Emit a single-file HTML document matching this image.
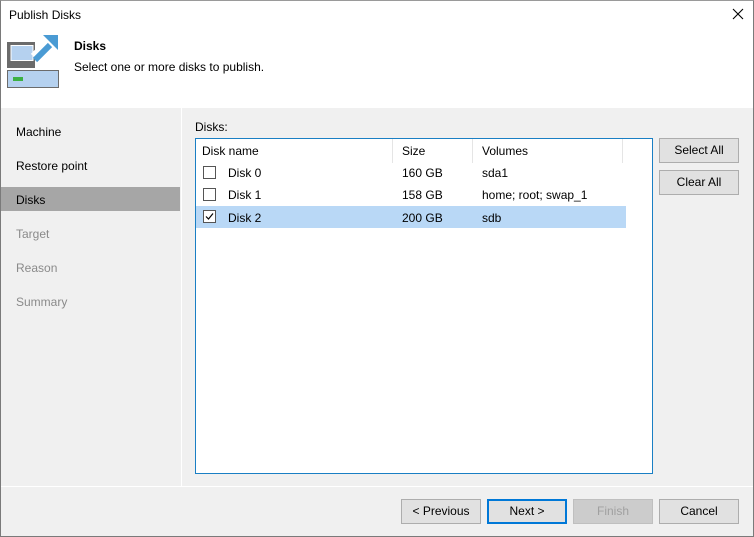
<!DOCTYPE html>
<html><head><style>
*{margin:0;padding:0;box-sizing:border-box}
body{width:754px;height:537px;overflow:hidden;font-family:"Liberation Sans",sans-serif;font-size:12px;color:#000;background:#f0f0f0;position:relative}
.win{position:absolute;left:0;top:0;width:754px;height:537px;border:1px solid #7a7a7a;border-top-color:#9a9a9a}
.abs{position:absolute}
.hdr{left:1px;top:1px;width:752px;height:107px;background:#fff}
.btn{position:absolute;height:25px;background:#e1e1e1;border:1px solid #adadad;text-align:center;line-height:23px;font-size:12px}
.cb{position:absolute;width:13px;height:13px;border:1px solid #555;background:#fff}
</style></head><body>
<div class="win"></div>
<div class="abs hdr"></div>
<div class="abs" style="left:9px;top:8px;font-size:12px">Publish Disks</div>
<svg class="abs" style="left:732px;top:8px" width="12" height="12"><path d="M1 1L11 11M11 1L1 11" stroke="#000" stroke-width="1.1"/></svg>
<svg class="abs" style="left:0;top:0" width="70" height="100">
<rect x="7" y="42" width="28" height="26" fill="#6b6b6b"/>
<rect x="11" y="45.5" width="22" height="15" fill="#b5d1ef" stroke="#fff" stroke-width="1"/>
<path d="M34 57 L48 43" stroke="#fff" stroke-width="9"/>
<path d="M35 60 L50 45" stroke="#4a9bd4" stroke-width="6"/>
<path d="M43 35 L58 35 L58 50 Z" fill="#4a9bd4"/>
<rect x="7.5" y="70.5" width="51" height="17" fill="#b5d1ef" stroke="#6b6b6b"/>
<rect x="13" y="77" width="10" height="4" fill="#3cb043"/>
</svg>
<div class="abs" style="left:74px;top:39px;font-weight:bold;font-size:12px">Disks</div>
<div class="abs" style="left:74px;top:60px">Select one or more disks to publish.</div>
<div class="abs" style="left:181px;top:108px;width:1px;height:378px;background:#fff"></div>
<div class="abs" style="left:16px;top:125px">Machine</div>
<div class="abs" style="left:16px;top:159px">Restore point</div>
<div class="abs" style="left:1px;top:187px;width:179px;height:24px;background:#a6a6a6"></div>
<div class="abs" style="left:16px;top:193px">Disks</div>
<div class="abs" style="left:16px;top:227px;color:#8a8a8a">Target</div>
<div class="abs" style="left:16px;top:261px;color:#8a8a8a">Reason</div>
<div class="abs" style="left:16px;top:295px;color:#8a8a8a">Summary</div>
<div class="abs" style="left:195px;top:120px">Disks:</div>
<div class="abs" style="left:195px;top:138px;width:458px;height:336px;background:#fff;border:1px solid #1a7fc4"></div>
<div class="abs" style="left:392px;top:139px;width:1px;height:24px;background:#e5e5e5"></div>
<div class="abs" style="left:472px;top:139px;width:1px;height:24px;background:#e5e5e5"></div>
<div class="abs" style="left:622px;top:139px;width:1px;height:24px;background:#e5e5e5"></div>
<div class="abs" style="left:202px;top:144px">Disk name</div>
<div class="abs" style="left:402px;top:144px">Size</div>
<div class="abs" style="left:482px;top:144px">Volumes</div>
<div class="abs" style="left:196px;top:206px;width:430px;height:22px;background:#b9d8f6"></div>
<div class="cb" style="left:203px;top:166px"></div>
<div class="cb" style="left:203px;top:188px"></div>
<div class="cb" style="left:203px;top:210px"><svg width="11" height="11" style="display:block"><path d="M2 5.5L4.5 8L9 2.5" stroke="#000" stroke-width="1.2" fill="none"/></svg></div>
<div class="abs" style="left:228px;top:166px">Disk 0</div>
<div class="abs" style="left:402px;top:166px">160 GB</div>
<div class="abs" style="left:482px;top:166px">sda1</div>
<div class="abs" style="left:228px;top:188px">Disk 1</div>
<div class="abs" style="left:402px;top:188px">158 GB</div>
<div class="abs" style="left:482px;top:188px">home; root; swap_1</div>
<div class="abs" style="left:228px;top:211px">Disk 2</div>
<div class="abs" style="left:402px;top:211px">200 GB</div>
<div class="abs" style="left:482px;top:211px">sdb</div>
<div class="btn" style="left:659px;top:138px;width:80px">Select All</div>
<div class="btn" style="left:659px;top:170px;width:80px">Clear All</div>
<div class="abs" style="left:1px;top:486px;width:752px;height:1px;background:#fff"></div>
<div class="btn" style="left:401px;top:499px;width:80px">&lt; Previous</div>
<div class="btn" style="left:487px;top:499px;width:80px;border:2px solid #0078d7;line-height:21px">Next &gt;</div>
<div class="btn" style="left:573px;top:499px;width:80px;background:#cccccc;border-color:#bfbfbf;color:#a0a0a0">Finish</div>
<div class="btn" style="left:659px;top:499px;width:80px">Cancel</div>
</body></html>
